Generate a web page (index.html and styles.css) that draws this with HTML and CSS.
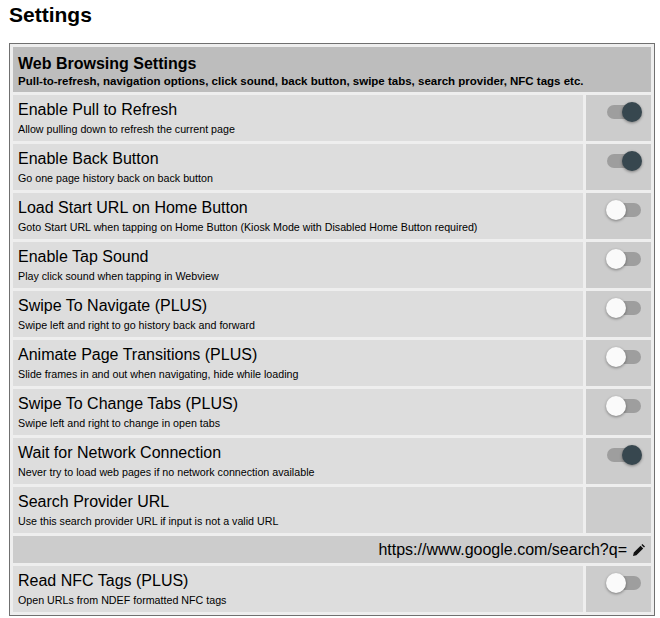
FILE: index.html
```html
<!DOCTYPE html>
<html lang="en">
<head>
    <meta charset="UTF-8">
    <meta name="viewport" content="width=device-width, initial-scale=1.0">
    <title>Settings</title>
    <link rel="stylesheet" href="styles.css">
</head>
<body>

    <h1>Settings</h1>

    <div class="settings-box">
        <div class="group-head">
            <div class="group-title">Web Browsing Settings</div>
            <div class="group-desc">Pull-to-refresh, navigation options, click sound, back button, swipe tabs, search provider, NFC tags etc.</div>
        </div>

        <div class="setting-info">
            <div class="setting-title">Enable Pull to Refresh</div>
            <div class="setting-desc">Allow pulling down to refresh the current page</div>
        </div>
        <div class="setting-control"><span class="toggle on"><span class="knob"></span></span></div>

        <div class="setting-info">
            <div class="setting-title">Enable Back Button</div>
            <div class="setting-desc">Go one page history back on back button</div>
        </div>
        <div class="setting-control"><span class="toggle on"><span class="knob"></span></span></div>

        <div class="setting-info">
            <div class="setting-title">Load Start URL on Home Button</div>
            <div class="setting-desc">Goto Start URL when tapping on Home Button (Kiosk Mode with Disabled Home Button required)</div>
        </div>
        <div class="setting-control"><span class="toggle"><span class="knob"></span></span></div>

        <div class="setting-info">
            <div class="setting-title">Enable Tap Sound</div>
            <div class="setting-desc">Play click sound when tapping in Webview</div>
        </div>
        <div class="setting-control"><span class="toggle"><span class="knob"></span></span></div>

        <div class="setting-info">
            <div class="setting-title">Swipe To Navigate (PLUS)</div>
            <div class="setting-desc">Swipe left and right to go history back and forward</div>
        </div>
        <div class="setting-control"><span class="toggle"><span class="knob"></span></span></div>

        <div class="setting-info">
            <div class="setting-title">Animate Page Transitions (PLUS)</div>
            <div class="setting-desc">Slide frames in and out when navigating, hide while loading</div>
        </div>
        <div class="setting-control"><span class="toggle"><span class="knob"></span></span></div>

        <div class="setting-info">
            <div class="setting-title">Swipe To Change Tabs (PLUS)</div>
            <div class="setting-desc">Swipe left and right to change in open tabs</div>
        </div>
        <div class="setting-control"><span class="toggle"><span class="knob"></span></span></div>

        <div class="setting-info">
            <div class="setting-title">Wait for Network Connection</div>
            <div class="setting-desc">Never try to load web pages if no network connection available</div>
        </div>
        <div class="setting-control"><span class="toggle on"><span class="knob"></span></span></div>

        <div class="setting-info">
            <div class="setting-title">Search Provider URL</div>
            <div class="setting-desc">Use this search provider URL if input is not a valid URL</div>
        </div>
        <div class="setting-control"></div>

        <div class="url-row">
            https://www.google.com/search?q=
            <svg class="edit-icon" viewBox="0 0 12 12" width="12" height="12">
                <path d="M0 12 L0.8 8.6 L7.6 1.8 L10.2 4.4 L3.4 11.2 Z M8.4 1 L9.4 0 L12 2.6 L11 3.6 Z"/>
            </svg>
        </div>

        <div class="setting-info">
            <div class="setting-title">Read NFC Tags (PLUS)</div>
            <div class="setting-desc">Open URLs from NDEF formatted NFC tags</div>
        </div>
        <div class="setting-control"><span class="toggle"><span class="knob"></span></span></div>
    </div>

</body>
</html>
```

FILE: styles.css
```css
body {
    font-family: "Liberation Sans", Arial, sans-serif;
    background: #fff;
    color: #000;
    margin: 0;
    padding: 0 5px 0 9px;
}

h1 {
    font-size: 21px;
    line-height: 24px;
    font-weight: bold;
    margin: 3px 0 16px;
}

.settings-box {
    display: grid;
    grid-template-columns: 1fr 65px;
    gap: 3px;
    padding: 3px;
    border: 1px solid #707070;
    background: #eee;
}

.group-head {
    grid-column: 1 / 3;
    background: #bdbdbd;
    padding: 7px 5px 4px;
    font-weight: bold;
}

.group-title {
    font-size: 16px;
    line-height: 20px;
}

.group-desc {
    font-size: 11.5px;
    line-height: 13px;
    margin-top: 1px;
}

.setting-info {
    background: #ddd;
    padding: 6px 5px 5px;
    height: 35px;
}

.setting-title {
    font-size: 16px;
    line-height: 18px;
    margin-bottom: 4px;
}

.setting-desc {
    font-size: 10.7px;
    line-height: 13px;
}

.setting-control {
    background: #ccc;
    padding: 10px 0 0 21px;
}

.toggle {
    display: block;
    position: relative;
    width: 34px;
    height: 14px;
    border-radius: 7px;
    background: #9e9e9e;
}

.knob {
    position: absolute;
    top: -3px;
    left: -1px;
    width: 20px;
    height: 20px;
    border-radius: 50%;
    background: #fafafa;
    box-shadow: 0 1px 3px rgba(0, 0, 0, 0.4);
}

.toggle.on .knob {
    left: 15px;
    background: #37474f;
}

.url-row {
    grid-column: 1 / 3;
    background: #ccc;
    height: 27px;
    padding: 0 6px;
    display: flex;
    align-items: center;
    justify-content: flex-end;
    gap: 6px;
    font-size: 16px;
}

.edit-icon {
    fill: #111;
}
```
